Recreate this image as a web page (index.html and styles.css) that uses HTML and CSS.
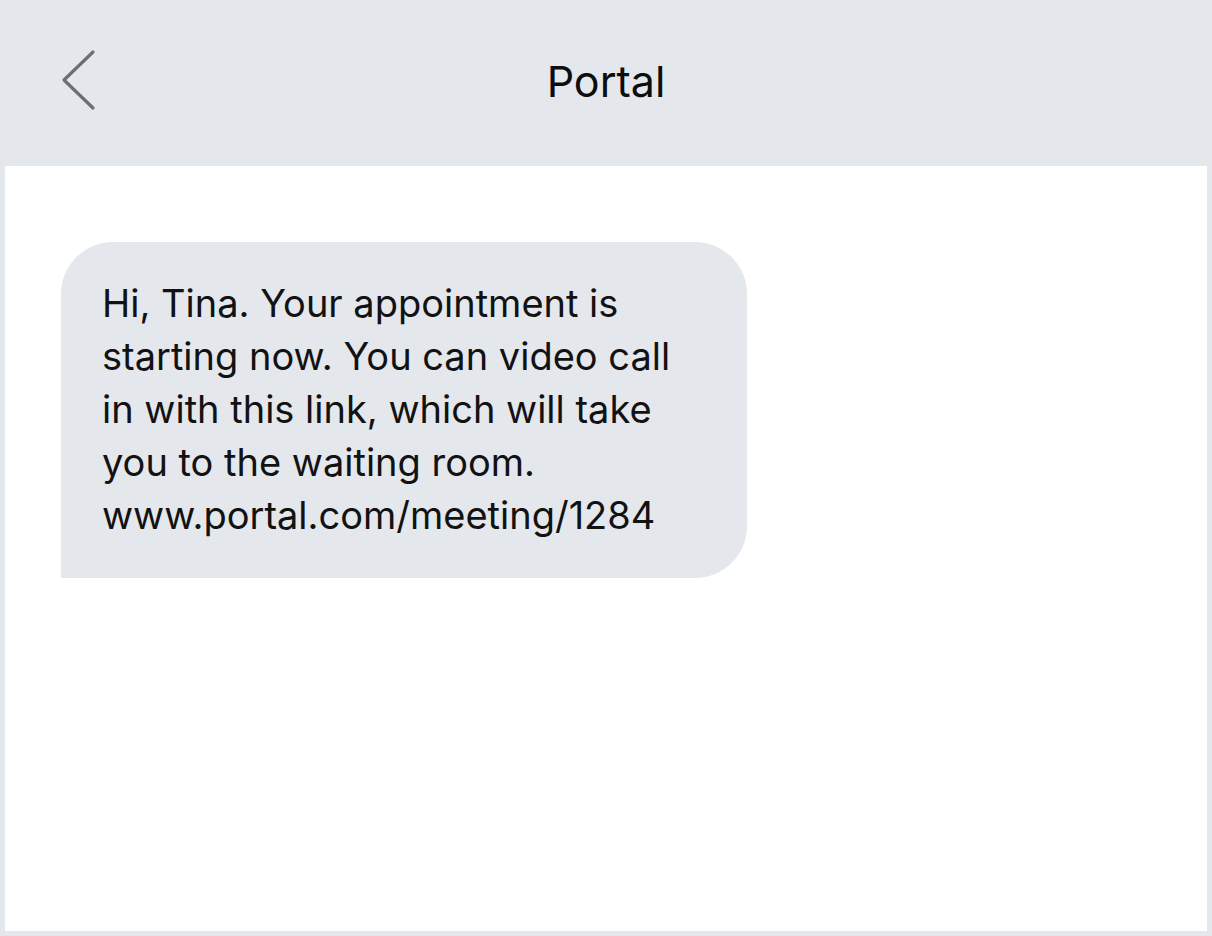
FILE: index.html
```html
<!DOCTYPE html>
<html lang="en">
<head>
  <meta charset="UTF-8" />
  <title>Portal</title>
  <link rel="stylesheet" href="styles.css">
</head>
<body>
  <div class="phone">
    <header class="top-bar">
      <button class="back" aria-label="Back">
        <svg width="36" height="64" viewBox="0 0 36 64">
          <polyline points="32,3 3,31 32,59" fill="none" stroke="#6b6f76" stroke-width="3.2" stroke-linecap="round" stroke-linejoin="round" />
        </svg>
      </button>
      <div class="title">Portal</div>
    </header>

    <main class="thread">
      <div class="bubble">
        Hi, Tina. Your appointment is starting now. You can video call in with this link, which will take you to the waiting room. www.portal.com/meeting/1284
      </div>
    </main>
  </div>
</body>
</html>
```

FILE: styles.css
```css
html, body {
  height: 100%;
}
body {
  margin: 0;
  background-color: #e4e7ec;
  font-family: Inter, "Noto Sans", sans-serif;
  color: #111;
}
.phone {
  display: flex;
  flex-direction: column;
  height: 100%;
}
.top-bar {
  height: 166px;
  flex-shrink: 0;
  display: flex;
  align-items: center;
  justify-content: center;
  position: relative;
}
.top-bar .back {
  position: absolute;
  left: 61px;
  top: 49px;
  padding: 0;
  border: none;
  background: none;
  line-height: 0;
  cursor: pointer;
}
.top-bar .title {
  font-size: 43px;
  font-weight: 400;
  color: #0d0d0d;
  padding-bottom: 4px;
}
.thread {
  flex: 1;
  background-color: #fff;
  margin: 0 5px 5px 5px;
  padding: 76px 0 0 56px;
}
.bubble {
  box-sizing: border-box;
  width: 686px;
  padding: 35px 60px 36px 41px;
  background-color: #e4e7ec;
  border-radius: 52px 52px 52px 0;
  font-size: 38px;
  line-height: 53px;
  color: #121212;
}
```
